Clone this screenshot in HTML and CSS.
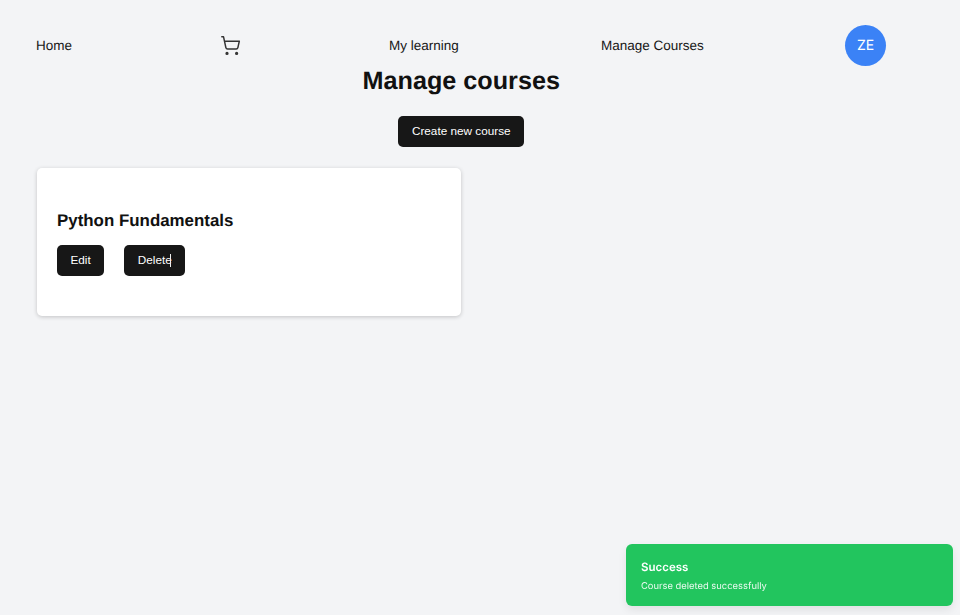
FILE: index.html
```html
<!DOCTYPE html>
<html lang="en">
<head>
    <meta charset="UTF-8">
    <meta name="viewport" content="width=device-width, initial-scale=1.0">
    <title>Manage courses</title>
    <link rel="stylesheet" href="styles.css">
</head>
<body>

    <nav class="navbar">
        <a class="nav-link" href="#">Home</a>
        <a class="cart-link" href="#" aria-label="Cart">
            <svg class="cart-icon" viewBox="0 0 24 24" fill="none" stroke="currentColor" stroke-width="1.7" stroke-linecap="round" stroke-linejoin="round">
                <circle cx="8" cy="21" r="1"/>
                <circle cx="19" cy="21" r="1"/>
                <path d="M2.05 2.05h2l2.66 12.42a2 2 0 0 0 2 1.58h9.78a2 2 0 0 0 1.95-1.57l1.65-7.43H5.12"/>
            </svg>
        </a>
        <a class="nav-link" href="#">My learning</a>
        <a class="nav-link" href="#">Manage Courses</a>
        <div class="avatar">ZE</div>
    </nav>

    <main class="page">
        <h1 class="page-title">Manage courses</h1>
        <div class="page-actions">
            <button class="btn">Create new course</button>
        </div>

        <div class="course-grid">
            <div class="course-card">
                <h2 class="course-title">Python Fundamentals</h2>
                <div class="course-actions">
                    <button class="btn">Edit</button>
                    <button class="btn btn-delete">Delete</button>
                </div>
            </div>
        </div>
    </main>

    <div class="toast">
        <div class="toast-title">Success</div>
        <div class="toast-text">Course deleted successfully</div>
    </div>

</body>
</html>
```

FILE: styles.css
```css
* {
    box-sizing: border-box;
}
body {
    margin: 0;
    min-height: 615px;
    background-color: #f3f4f6;
    color: #111;
    font-family: "Liberation Sans", Arial, sans-serif;
    text-rendering: geometricPrecision;
}
.navbar {
    display: grid;
    grid-template-columns: 184px 169px 212px 244px 41px;
    align-items: center;
    height: 41px;
    margin-top: 25px;
    padding-left: 36px;
}
.nav-link {
    padding-bottom: 1px;
    color: #171717;
    font-size: 13.5px;
    text-decoration: none;
}
.cart-link {
    display: flex;
    color: #333;
}
.cart-icon {
    width: 21px;
    height: 21px;
}
.avatar {
    display: flex;
    align-items: center;
    justify-content: center;
    width: 41px;
    height: 41px;
    border-radius: 50%;
    background: #3b82f6;
    color: white;
    font-family: Inter, "Liberation Sans", sans-serif;
    font-size: 14px;
}
.page {
    padding: 0 74px 0 36.5px;
}
.page-title {
    margin: 0;
    font-size: 25.2px;
    line-height: 30px;
    text-align: center;
}
.page-actions {
    display: flex;
    justify-content: center;
    margin: 20px 0 21.5px;
}
.btn {
    height: 30.5px;
    padding: 0 13.5px 1px;
    border: none;
    border-radius: 5px;
    background: #171717;
    color: white;
    font-family: "Liberation Sans", Arial, sans-serif;
    font-size: 11.75px;
}
.course-grid {
    display: grid;
    grid-template-columns: 424px;
}
.course-card {
    height: 148px;
    padding: 42px 20.5px;
    border-radius: 5px;
    background: white;
    box-shadow: 0 1px 4px rgba(0, 0, 0, 0.2);
}
.course-title {
    margin: 0 0 14px;
    font-size: 16.9px;
    line-height: 21px;
}
.course-actions {
    display: flex;
    gap: 20px;
}
/* text cursor sitting on the button in the screenshot */
.btn-delete {
    position: relative;
}
.btn-delete::after {
    content: "";
    position: absolute;
    left: 46px;
    top: 9px;
    width: 1px;
    height: 13px;
    background: #eee;
}
.toast {
    position: fixed;
    right: 7px;
    bottom: 9px;
    width: 327px;
    height: 62px;
    padding: 16px 15px;
    border-radius: 6px;
    background: #22c55e;
    color: white;
    font-family: Inter, "Liberation Sans", sans-serif;
    box-shadow: 0 4px 8px rgba(0, 0, 0, 0.08);
}
.toast-title {
    font-size: 11.5px;
    font-weight: 600;
    line-height: 15px;
}
.toast-text {
    margin-top: 5px;
    font-size: 9.4px;
    line-height: 14px;
    opacity: 0.9;
}
```
